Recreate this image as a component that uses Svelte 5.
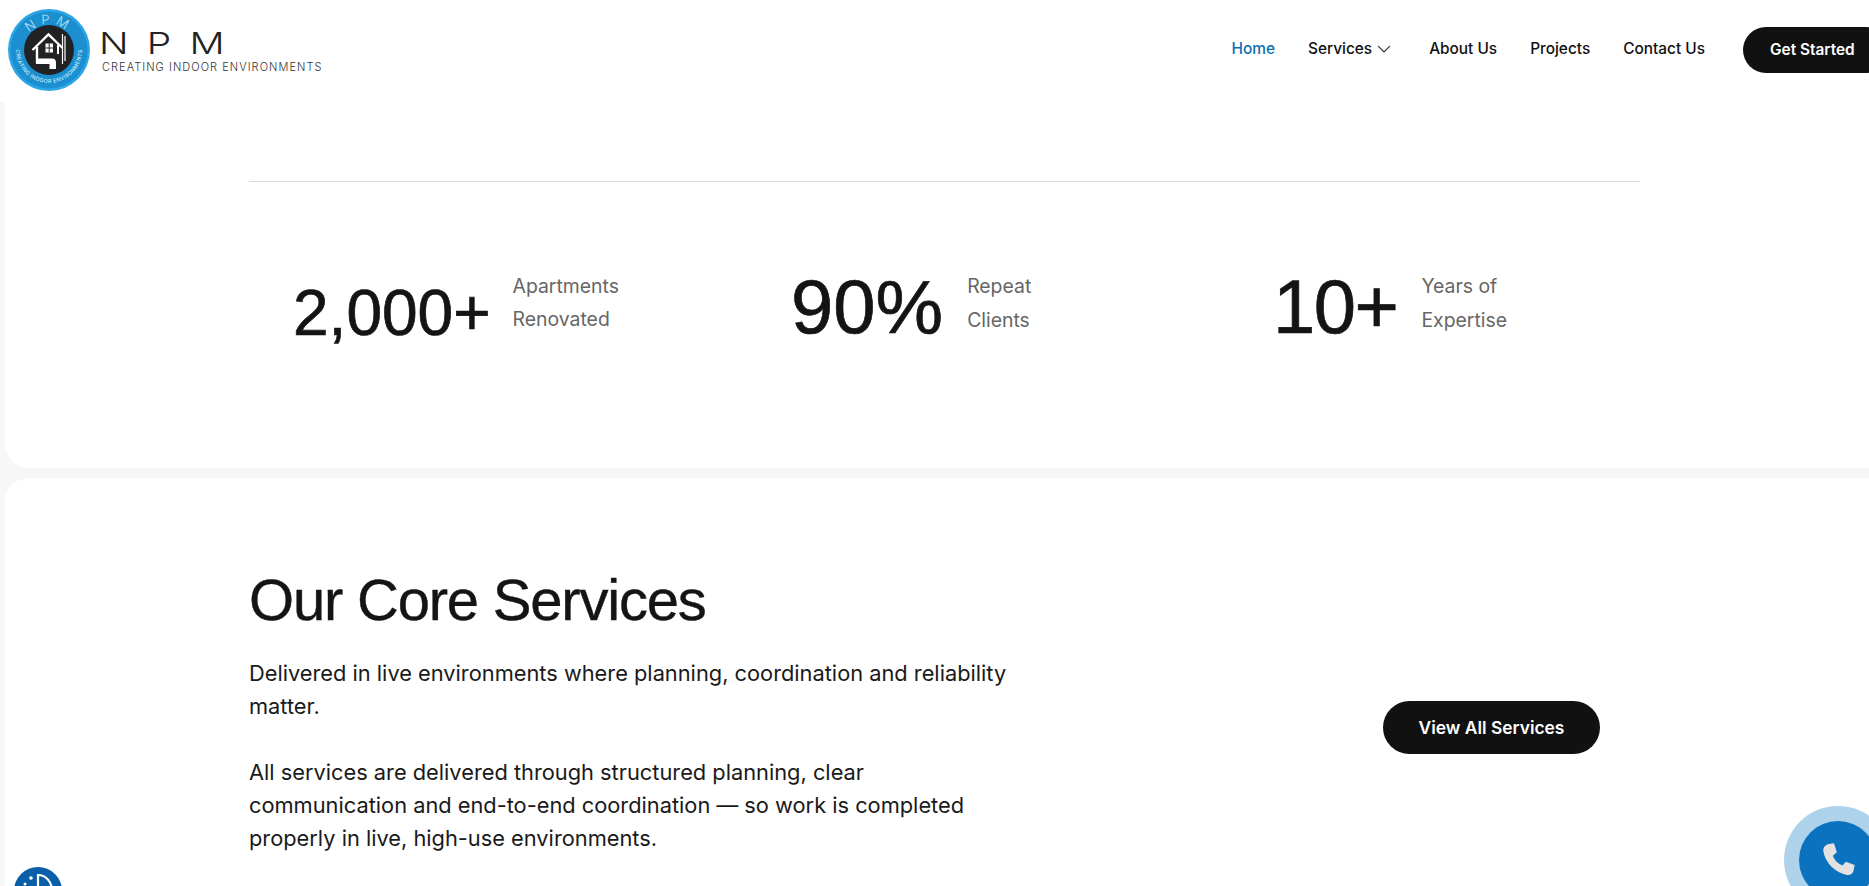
<script>
  let navLinks = [
    { label: "Home", active: true },
    { label: "Services", caret: true },
    { label: "About Us" },
    { label: "Projects" },
    { label: "Contact Us" }
  ];

  let stats = [
    { value: "2,000+", lines: ["Apartments", "Renovated"], cls: "first" },
    { value: "90%", lines: ["Repeat", "Clients"], cls: "second" },
    { value: "10+", lines: ["Years of", "Expertise"], cls: "third" }
  ];
</script>

<div class="page">
  <header>
    <a class="brand" href="#top">
      <svg class="badge" viewBox="0 0 82 82" width="82" height="82">
        <defs>
          <path id="arcTop" d="M15 41 A26 26 0 0 1 67 41" />
          <path id="arcBottom" d="M8.500 35.300 A33 33 0 1 0 73.500 35.300" />
        </defs>
        <circle cx="41" cy="41" r="41" fill="#2ea6e6" />
        <circle cx="41" cy="41" r="38.500" fill="#1b8fd0" />
        <circle cx="41" cy="41" r="25" fill="#222225" />
        <text class="badge-top"><textPath href="#arcTop" startOffset="50%" text-anchor="middle">NPM</textPath></text>
        <text class="badge-bottom"><textPath href="#arcBottom" startOffset="50%" text-anchor="middle">CREATING INDOOR ENVIRONMENTS</textPath></text>
        <path d="M24.500 41 L40.500 25.500 L54.500 39 M29 38 V54" fill="none" stroke="#fff" stroke-width="2.400" />
        <path d="M50 36 V45" fill="none" stroke="#fff" stroke-width="2" />
        <path d="M28 49.500 H44 Q48 49.500 48 53.500 V60 H41.500 V55 H28 Z" fill="#fff" />
        <rect x="37.500" y="34.500" width="7.500" height="9" fill="#fff" />
        <path d="M41.200 34.500 V43.500 M37.500 39 H45" stroke="#222225" stroke-width="1" />
        <path d="M54.500 25 V55 M57 27 V52" stroke="#fff" stroke-width="1.200" />
      </svg>
      <span class="wordmark">
        <span class="npm">NPM</span>
        <span class="tagline">CREATING INDOOR ENVIRONMENTS</span>
      </span>
    </a>

    <nav>
      {#each navLinks as link}
        <a href="#top" class:active={link.active}>
          {link.label}
          {#if link.caret}
            <svg class="caret" viewBox="0 0 12 12" width="14" height="14">
              <path d="M1 3.500 L6 8.500 L11 3.500" fill="none" stroke="#333" stroke-width="1" />
            </svg>
          {/if}
        </a>
      {/each}
      <a class="cta" href="#top">Get Started</a>
    </nav>
  </header>

  <section class="card stats-card">
    <div class="rule"></div>
    <div class="stats">
      {#each stats as s}
        <div class="stat {s.cls}">
          <span class="value">{s.value}</span>
          <span class="label">{s.lines[0]}<br />{s.lines[1]}</span>
        </div>
      {/each}
    </div>
  </section>

  <section class="card services-card">
    <div class="services-row">
      <div class="intro">
        <h2>Our Core Services</h2>
        <p>Delivered in live environments where planning, coordination and reliability matter.</p>
        <p>All services are delivered through structured planning, clear communication and end-to-end coordination — so work is completed properly in live, high-use environments.</p>
      </div>
      <a class="view-all" href="#top">View All Services</a>
    </div>
  </section>

  <div class="a11y">
    <svg viewBox="0 0 48 48" width="48" height="48">
      <circle cx="24" cy="24" r="24" fill="#0b5ea8" />
      <circle cx="17" cy="11" r="1.800" fill="#fff" />
      <circle cx="11" cy="17" r="1.500" fill="#fff" />
      <path d="M24 8 C32 8 38 15 38 24 C38 32 32 38 24 38 Z" fill="none" stroke="#fff" stroke-width="2.200" />
    </svg>
  </div>

  <div class="call">
    <div class="call-inner">
      <svg viewBox="0 0 24 24" width="40" height="40">
        <path d="M6.600 2.400 L9.600 2 L11.300 7.400 L8.900 9.400 C9.800 12 11.700 14 14.700 15.300 L16.700 13 L22 15 L21.400 18.200 C21 20.200 19.400 21.300 17.400 21 C10.400 19.900 4.300 13.600 3.200 6.800 C2.900 4.600 4.400 2.800 6.600 2.400 Z" fill="#e2e2e2" />
      </svg>
    </div>
  </div>
</div>

<style>
  :global(body) {
    margin: 0;
    background: #f7f7f7;
  }

  .page {
    position: relative;
    height: 886px;
    overflow: hidden;
    font-family: Inter, "Noto Sans", sans-serif;
    color: #111;
  }

  header {
    height: 102px;
    background: #fff;
    display: flex;
    align-items: center;
    justify-content: space-between;
    padding-left: 8px;
    box-sizing: border-box;
  }

  a {
    color: inherit;
    text-decoration: none;
  }

  .brand {
    display: flex;
    align-items: center;
    gap: 12px;
    margin-top: -3px;
  }

  .badge-top {
    font: 300 13px Inter, sans-serif;
    letter-spacing: 5px;
    fill: #b5e2f7;
  }

  .badge-bottom {
    font: 500 5.300px Inter, sans-serif;
    letter-spacing: 0.400px;
    fill: #cdeafa;
  }

  .wordmark {
    display: flex;
    flex-direction: column;
  }

  .npm {
    font-size: 30px;
    font-weight: 300;
    letter-spacing: 14px;
    line-height: 34px;
    margin-left: -3px;
    color: #222;
    transform: scaleX(1.3);
    transform-origin: left center;
  }

  .tagline {
    font-size: 11px;
    font-weight: 300;
    letter-spacing: 1.050px;
    line-height: 14px;
    color: #333;
    white-space: nowrap;
  }

  nav {
    display: flex;
    align-items: center;
    font-size: 15.400px;
    font-weight: 500;
    white-space: nowrap;
    margin-right: -20px;
    margin-top: -5px;
  }

  nav a {
    display: flex;
    align-items: center;
    gap: 5px;
    margin-left: 33px;
  }

  nav a.active {
    color: #0f6fae;
  }

  .caret {
    margin-right: 5px;
  }

  nav a.cta {
    margin-left: 38px;
    width: 146px;
    height: 46px;
    box-sizing: border-box;
    padding-left: 27px;
    border-radius: 23px;
    background: #111;
    color: #fff;
    font-weight: 600;
    position: relative;
    top: 1px;
  }

  .card {
    background: #fff;
    margin-left: 5px;
  }

  .stats-card {
    height: 366px;
    box-sizing: border-box;
    padding: 79px 229px 0 244px;
    border-bottom-left-radius: 24px;
  }

  .rule {
    height: 1px;
    background: #d9d9d9;
  }

  .stats {
    display: grid;
    grid-template-columns: 498px 482px 1fr;
    margin-top: 88px;
    padding-left: 44px;
  }

  .stat {
    display: flex;
    align-items: flex-start;
    gap: 24px;
  }

  .first {
    gap: 22px;
  }

  .value {
    font-family: "Liberation Sans", Arial, sans-serif;
    font-size: 76px;
    line-height: 66px;
    margin-top: 4px;
    color: #141414;
    -webkit-text-stroke: 0.7px #141414;
  }

  .first .value {
    font-size: 64px;
    letter-spacing: 0;
    margin-top: 10px;
  }

  .third .value {
    letter-spacing: -1.500px;
  }

  .label {
    font-size: 19.400px;
    line-height: 33px;
    color: #666;
  }

  .second .label,
  .third .label {
    line-height: 34px;
    margin-top: -1px;
  }

  .services-card {
    margin-top: 10px;
    height: 420px;
    box-sizing: border-box;
    padding: 86px 0 0 244px;
    border-top-left-radius: 24px;
  }

  .services-row {
    display: flex;
    width: 1351px;
    justify-content: space-between;
    align-items: center;
  }

  .intro {
    width: 770px;
  }

  h2 {
    margin: 0 0 21px;
    font-family: "Liberation Sans", Arial, sans-serif;
    font-size: 58px;
    line-height: 72px;
    font-weight: 400;
    letter-spacing: -1.200px;
    color: #141414;
    -webkit-text-stroke: 0.4px #141414;
  }

  p {
    margin: 0 0 33px;
    font-size: 21.800px;
    line-height: 33px;
    color: #1a1a1a;
  }

  .view-all {
    width: 217px;
    height: 53px;
    border-radius: 27px;
    background: #111;
    color: #fff;
    font-size: 17.400px;
    font-weight: 600;
    display: flex;
    align-items: center;
    justify-content: center;
    margin-top: 2px;
  }

  .a11y {
    position: absolute;
    left: 14px;
    top: 867px;
    width: 48px;
    height: 48px;
  }

  .call {
    position: absolute;
    left: 1784px;
    top: 806px;
    width: 108px;
    height: 108px;
    border-radius: 50%;
    background: #aed2ea;
    display: flex;
    align-items: center;
    justify-content: center;
  }

  .call-inner {
    width: 78px;
    height: 78px;
    border-radius: 50%;
    background: #0b72bf;
    display: flex;
    align-items: center;
    justify-content: center;
  }
</style>
